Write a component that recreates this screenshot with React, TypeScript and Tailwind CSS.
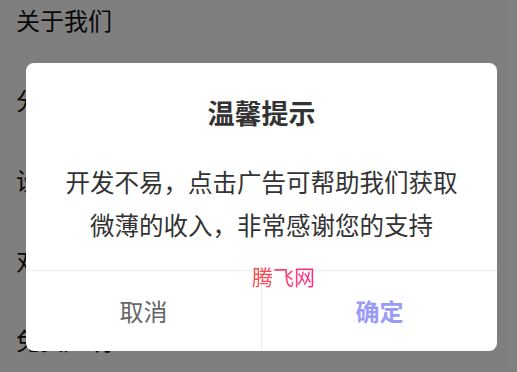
const menuItems = ["关于我们", "分享给好友", "设置", "对我们评分", "免责声明"];

export default function App() {
  return (
    <div
      className="relative h-[372px] w-[517px] overflow-hidden bg-white"
      style={{ fontFamily: '"Noto Sans CJK SC", "Noto Sans", sans-serif' }}
    >
      <ul className="-mt-[20px]">
        {menuItems.map((item) => (
          <li key={item} className="flex h-[80px] items-center px-[16px] text-[24px] text-[#111]">
            {item}
          </li>
        ))}
      </ul>

      <div className="absolute inset-0 flex items-start bg-black/50 pl-[26px] pt-[63px]">
        <div className="relative w-[471px] overflow-hidden rounded-[8px] bg-white">
          <h2 className="pt-[36px] text-center text-[27px] font-bold leading-[28px] text-[#333]">温馨提示</h2>
          <p className="mt-[33px] px-[30px] pb-[24px] text-center text-[24.5px] leading-[43px] text-[#333]">
            开发不易，点击广告可帮助我们获取
            <br />
            微薄的收入，非常感谢您的支持
          </p>
          <div className="flex h-[81px] border-t border-[#eeeeee]">
            <button type="button" className="flex-1 border-r border-[#eeeeee] text-[24px] text-[#666]">
              取消
            </button>
            <button type="button" className="flex-1 text-[24px] font-bold text-[#9b9bf7]">
              确定
            </button>
          </div>
          <span className="absolute left-[226px] top-[199px] bg-gradient-to-r from-[#ff4a3c] to-[#ff2a90] bg-clip-text text-[21px] leading-[28px] text-transparent">
            腾飞网
          </span>
        </div>
      </div>
    </div>
  );
}
